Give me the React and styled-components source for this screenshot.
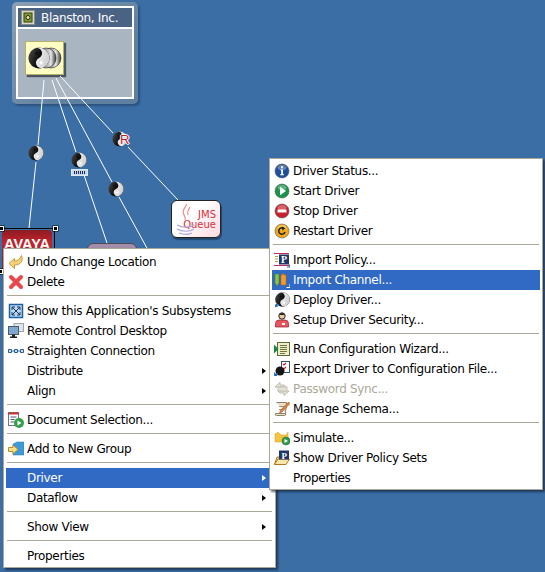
import React from "react";
import styled, { createGlobalStyle } from "styled-components";

const Global = createGlobalStyle`
  html, body { margin: 0; padding: 0; background: #3a6ea5; }
  body { font-family: "DejaVu Sans", "Liberation Sans", sans-serif; }
`;

const Desktop = styled.div`
  position: relative;
  width: 545px;
  height: 572px;
  overflow: hidden;
  background: #3a6ea5;
`;

const Wires = styled.svg`
  position: absolute;
  left: 0;
  top: 0;
`;

const GradientDefs = styled.svg`
  position: absolute;
  width: 0;
  height: 0;
`;

const CompanyFrame = styled.div`
  position: absolute;
  left: 12px;
  top: 2px;
  width: 126px;
  height: 102px;
  box-sizing: border-box;
  padding: 4px;
  border-radius: 5px;
  background: linear-gradient(135deg, #8ba0b4, #5e7f9f 70%);
  box-shadow: 2px 2px 2px #2c5280;
`;

const CompanyInner = styled.div`
  display: flex;
  flex-direction: column;
  height: 93px;
  box-sizing: border-box;
  border: 2px solid #fff;
  background: #a9b5c0;
`;

const CompanyTitle = styled.div`
  display: flex;
  align-items: center;
  gap: 6px;
  height: 19px;
  padding-left: 3px;
  border-bottom: 2px solid #fff;
  background: #4a6283;
  color: #fff;
  font-size: 12px;
  letter-spacing: -0.32px;
  white-space: nowrap;
`;

const TitleBadge = styled.svg`
  flex: none;
`;

const CompanyBody = styled.div`
  padding: 12px 0 0 7px;
`;

const YellowNode = styled.div`
  display: flex;
  align-items: center;
  justify-content: center;
  width: 39px;
  height: 34px;
  box-sizing: border-box;
  border: 1px solid #b5b06a;
  background: #ffffc4;
  box-shadow: 2px 2px 1px #4c5662;
`;

const ConnectorDisc = styled.div`
  position: absolute;
  left: ${(p) => p.$x - 8}px;
  top: ${(p) => p.$y - 8}px;
  width: 16px;
  height: 16px;
`;

const DiscBadge = styled.span`
  position: absolute;
  left: 8px;
  top: 1px;
  color: #c0202c;
  font: 13px/15px "Liberation Sans", sans-serif;
  text-shadow: 1px 0 0 #fff, -1px 0 0 #fff, 0 1px 0 #fff, 0 -1px 0 #fff;
`;

const PolicyBar = styled.div`
  position: absolute;
  left: 71px;
  top: 169px;
  display: flex;
  align-items: center;
  justify-content: center;
  width: 15px;
  height: 5px;
  background: #c4d8f0;
  border: 1px solid #dfe9f5;
  box-sizing: content-box;
`;

const BarDots = styled.div`
  width: 11px;
  height: 3px;
  background: repeating-linear-gradient(90deg, #1c2a50 0 1px, transparent 1px 2px);
`;

const JmsNode = styled.div`
  position: absolute;
  left: 171px;
  top: 200px;
  display: flex;
  flex-direction: column;
  align-items: flex-end;
  justify-content: center;
  width: 50px;
  height: 38px;
  box-sizing: border-box;
  padding: 1px 4px 0 0;
  border: 1px solid #222;
  border-radius: 6px;
  background: linear-gradient(135deg, #fff 40%, #ffd9de);
  box-shadow: 1px 2px 1px #23456e;
  color: #d8303c;
  font: 10px/10px "DejaVu Sans", sans-serif;
`;

const JavaCup = styled.svg`
  position: absolute;
  left: 2px;
  top: 0;
`;

const AvayaFrame = styled.div`
  position: absolute;
  left: 0;
  top: 228px;
  width: 55px;
  height: 46px;
  box-sizing: border-box;
  padding: 1px 2px 0 2px;
  border-top: 1px solid #000;
  border-right: 1px solid #000;
`;

const AvayaLogo = styled.div`
  height: 42px;
  border-radius: 4px;
  background: linear-gradient(180deg, #8c1c22, #c2242c 30%, #901a20);
  color: #fff;
  font: bold 14.5px/28px "Liberation Sans", sans-serif;
  text-align: center;
  white-space: nowrap;
`;

const Handle = styled.div`
  position: absolute;
  left: ${(p) => p.$x}px;
  top: ${(p) => p.$y}px;
  width: 3px;
  height: 3px;
  border: 1px solid #fff;
  background: #000;
  box-shadow: 0 0 0 0.5px #000;
`;

const PurpleNode = styled.div`
  position: absolute;
  left: 87px;
  top: 243px;
  width: 50px;
  height: 30px;
  box-sizing: border-box;
  border: 1px solid #4a4a58;
  border-radius: 6px;
  background: #a48da8;
`;

const Menu = styled.div`
  position: absolute;
  left: ${(p) => p.$left}px;
  top: ${(p) => p.$top}px;
  width: ${(p) => p.$width}px;
  box-sizing: border-box;
  padding: ${(p) => p.$padTop}px 2px 1px 2px;
  border: 1px solid #aca899;
  background: #fff;
  box-shadow: 2px 2px 2px rgba(20, 30, 50, 0.65);
  font-size: 12px;
  letter-spacing: -0.32px;
  color: #000;
`;

const Row = styled.div`
  display: flex;
  align-items: center;
  height: 20px;
  padding-left: 2px;
  white-space: nowrap;
  background: ${(p) => (p.$active ? "#316ac5" : "transparent")};
  color: ${(p) => (p.$active ? "#fff" : p.$disabled ? "#aca899" : "#000")};
`;

const IconSlot = styled.span`
  display: flex;
  flex: none;
  width: 16px;
  height: 16px;
  margin-right: 3px;
`;

const Label = styled.span`
  flex: 1;
`;

const Caret = styled.span`
  flex: none;
  width: 0;
  height: 0;
  margin-right: 7px;
  border-style: solid;
  border-width: 3.5px 0 3.5px 4px;
  border-color: transparent transparent transparent currentColor;
`;

const Sep = styled.div`
  height: 1px;
  margin: 3px 1px 5px;
  background: #aca899;
`;

const Ic = ({ children }) => (
  <svg width="16" height="16" viewBox="0 0 16 16">{children}</svg>
);

const Yin = ({ cx = 8, cy = 8, r = 7.5 }) => (
  <g transform={`translate(${cx} ${cy}) rotate(-25) scale(${r / 7.5})`}>
    <circle r="7.5" fill="url(#yinDark)" />
    <path d="M0-7.5A7.5 7.5 0 0 1 0 7.5A3.75 3.75 0 0 1 0 0A3.75 3.75 0 0 0 0-7.5Z" fill="url(#yinLight)" />
    <circle cy="-3.75" r="1.1" fill="#111" />
    <circle cy="3.75" r="1.1" fill="#fff" />
  </g>
);

const Corner = () => <path d="M1 15.5V12.5H4Z M2 12h3v1.5H3.5V15H2Z" fill="#2a70c0" />;

const Ball = ({ fill, children }) => (
  <Ic>
    <circle cx="8" cy="8" r="7" fill={fill} stroke="#555" strokeWidth="0.6" />
    <ellipse cx="8" cy="4.6" rx="4.5" ry="2.6" fill="#fff" opacity="0.3" />
    {children}
  </Ic>
);

const Undo = () => (
  <Ic>
    <path d="M1 9.5 6.5 4.5V7.2C9.5 7 12 5 13.5 1.5 15.5 6.5 13 11 6.5 11V14.5Z" fill="#f7d27a" stroke="#c69a3c" />
  </Ic>
);
const Del = () => (
  <Ic>
    <path d="M3 3 13 13M13 3 3 13" stroke="#e8474c" strokeWidth="4" strokeLinecap="round" />
  </Ic>
);
const Expand = () => (
  <Ic>
    <rect x="1.5" y="1.5" width="13" height="13" fill="#bcd6ee" stroke="#1d5fa3" strokeWidth="1.5" />
    <path d="M4 4 12 12M12 4 4 12M4 4h3M4 4v3M12 4H9M12 4v3M4 12h3M4 12V9M12 12H9M12 12V9" stroke="#123a60" />
  </Ic>
);
const Monitors = () => (
  <Ic>
    <rect x="6" y="0.5" width="9.5" height="8" fill="#dfe4ea" stroke="#9aa4ae" />
    <rect x="0.5" y="3.5" width="10" height="8" fill="#7fa6cf" stroke="#4d5c6c" />
    <path d="M4 11.5h3v2h2v1.5H2V13.5h2Z" fill="#222" />
  </Ic>
);
const Straighten = () => (
  <Ic>
    <path d="M0 8h16" stroke="#2d6db0" />
    <path d="M0.5 6.5h3v3h-3ZM6.5 6.5h3v3h-3ZM12.5 6.5h3v3h-3Z" fill="#cfe0f2" stroke="#2d5f9c" />
  </Ic>
);
const DocPlay = () => (
  <Ic>
    <rect x="0.5" y="0.5" width="10" height="13" fill="#fff" stroke="#6d7480" />
    <path d="M0.5 1.5h10" stroke="#c33" strokeWidth="2" />
    <path d="M2.5 5h6M2.5 7.5h4M2.5 10h4" stroke="#4a5a7a" />
    <circle cx="11" cy="11" r="5" fill="#35a04a" />
    <path d="M9.5 8.5 13.5 11 9.5 13.5Z" fill="#fff" />
  </Ic>
);
const Group = () => (
  <Ic>
    <path d="M5 3 9 1h7v13H5Z" fill="#3f9ad8" stroke="#2b74b0" strokeWidth="0.5" />
    <path d="M0.5 6.5H5V4l5 4.5L5 13v-2.5H0.5Z" fill="#f9e08a" stroke="#c08a2a" />
  </Ic>
);
const Info = () => (
  <Ball fill="#1c4f9c">
    <path d="M7 3.2h2v2H7ZM6.5 6.5H9V11.2h1v1H6.2v-1h1V7.5h-.7Z" fill="#fff" />
  </Ball>
);
const Start = () => (
  <Ball fill="#19934a">
    <path d="M6 3.8 12 8 6 12.2Z" fill="#fff" />
  </Ball>
);
const Stop = () => (
  <Ball fill="#c8202c">
    <rect x="3.5" y="6.5" width="9" height="3" fill="#fff" />
  </Ball>
);
const Restart = () => (
  <Ball fill="#f0a818">
    <path d="M11 9A3.2 3.2 0 1 1 9.5 5.2" fill="none" stroke="#222" strokeWidth="1.5" />
    <path d="M8.2 3.5 11.5 5.5 8.2 7.5Z" fill="#222" />
  </Ball>
);
const Policy = () => (
  <Ic>
    <path d="M0 1.5h15M0 13.5h15" stroke="#c8285a" />
    <rect x="5" y="2.5" width="10" height="10" fill="#1e3766" />
    <text x="10" y="11" textAnchor="middle" fontSize="10" fontWeight="bold" fill="#fff" fontFamily="Liberation Serif">P</text>
    <path d="M1 4.5h3M1 7h3M1 9.5h3" stroke="#b0a040" />
    <path d="M13 15.5h3v-3h-1v2h-2Z" fill="#2a70c0" />
  </Ic>
);
const Channel = () => (
  <Ic>
    <path d="M1 2h4v9l-2 3-2-3Z" fill="#8cc63f" stroke="#4d7a1f" strokeWidth="0.5" />
    <path d="M8 3l1-2 1 2h2v10H7V3Z" fill="#f79a28" stroke="#b8660c" strokeWidth="0.5" />
    <path d="M12.5 15.5H16V12" fill="none" stroke="#fff" />
  </Ic>
);
const Deploy = () => (
  <Ic>
    <Yin cx={8.5} cy={7.5} r={7.3} />
    <Corner />
  </Ic>
);
const Security = () => (
  <Ic>
    <circle cx="8" cy="4" r="3.2" fill="#f2c9a6" stroke="#222" />
    <path d="M5 3 8 .7 11 3Z" fill="#222" />
    <path d="M1.5 15V11.500Q1.5 8 5 8H11Q14.5 8 14.5 11.500V15Z" fill="#e8555f" stroke="#8c2028" strokeWidth="0.7" />
    <rect x="8" y="11" width="3" height="2" fill="#fff" />
  </Ic>
);
const Wizard = () => (
  <Ic>
    <rect x="3.5" y="1.5" width="12" height="13" fill="#efeec8" stroke="#5e6a3a" />
    <path d="M6 4.5h7M6 6.5h7M6 8.5h7M6 10.5h7M6 12.5h5" stroke="#6d7640" />
    <path d="M0 3.5 4.5 8 0 12.5Z" fill="#168a40" />
  </Ic>
);
const Export = () => (
  <Ic>
    <rect x="7.5" y="0.5" width="8" height="11" fill="#fff" stroke="#35507a" />
    <path d="M9 3l1 1 2-2M9 7l1 1 2-2" fill="none" stroke="#d8202c" strokeWidth="1.2" />
    <circle cx="6" cy="10" r="4.5" fill="#161616" />
    <path d="M0 15V11L2 13l2-1-1 3Z" fill="#2a70c0" />
  </Ic>
);
const Password = () => (
  <Ic>
    <path d="M1 6 6 1.5V4h4l2 2Z M15 10 10 14.5V12H6l-2-2Z" fill="#e8e6da" stroke="#bcb9aa" />
    <rect x="4" y="6" width="9" height="4" fill="#e4e2d6" stroke="#c4c1b3" />
  </Ic>
);
const Schema = () => (
  <Ic>
    <path d="M2.5 1.5h10l-1 11H1.5q-1 2 1 2h8q2 0 1-2" fill="#e6e0c8" stroke="#8c8468" />
    <path d="M5 8.5h5M5 5.5h6" stroke="#9c947a" />
    <path d="M14.5 1 6.5 9.5 5.5 12 8 11 16 2.5Z" fill="#e8823a" stroke="#8c4a18" strokeWidth="0.5" />
  </Ic>
);
const Simulate = () => (
  <Ic>
    <path d="M1 4 4 2l3 3h5l2-3v10H1Z" fill="#f5c33f" stroke="#d39a22" strokeWidth="0.5" />
    <circle cx="12" cy="11" r="4" fill="#2f9c4a" stroke="#1a6a30" strokeWidth="0.5" />
    <path d="M10.5 9 14 11 10.5 13Z" fill="#fff" />
  </Ic>
);
const PolicyFolder = () => (
  <Ic>
    <path d="M.5 14.5 3 7h3V14.5Z" fill="#f8d890" stroke="#b07a20" />
    <path d="M.5 14.5 4 9H15.5L12 14.5Z" fill="#fbe4a8" stroke="#b07a20" />
    <rect x="5" y="0.5" width="10" height="9" fill="#1e3766" />
    <text x="10" y="8.5" textAnchor="middle" fontSize="9" fontWeight="bold" fill="#fff" fontFamily="Liberation Serif">P</text>
  </Ic>
);

const SEP = { sep: true };

const leftItems = [
  { label: "Undo Change Location", Icon: Undo },
  { label: "Delete", Icon: Del },
  SEP,
  { label: "Show this Application's Subsystems", Icon: Expand },
  { label: "Remote Control Desktop", Icon: Monitors },
  { label: "Straighten Connection", Icon: Straighten },
  { label: "Distribute", sub: true },
  { label: "Align", sub: true },
  SEP,
  { label: "Document Selection...", Icon: DocPlay },
  SEP,
  { label: "Add to New Group", Icon: Group },
  SEP,
  { label: "Driver", sub: true, active: true },
  { label: "Dataflow", sub: true },
  SEP,
  { label: "Show View", sub: true },
  SEP,
  { label: "Properties" },
];

const rightItems = [
  { label: "Driver Status...", Icon: Info },
  { label: "Start Driver", Icon: Start },
  { label: "Stop Driver", Icon: Stop },
  { label: "Restart Driver", Icon: Restart },
  SEP,
  { label: "Import Policy...", Icon: Policy },
  { label: "Import Channel...", Icon: Channel, active: true },
  { label: "Deploy Driver...", Icon: Deploy },
  { label: "Setup Driver Security...", Icon: Security },
  SEP,
  { label: "Run Configuration Wizard...", Icon: Wizard },
  { label: "Export Driver to Configuration File...", Icon: Export },
  { label: "Password Sync...", Icon: Password, disabled: true },
  { label: "Manage Schema...", Icon: Schema },
  SEP,
  { label: "Simulate...", Icon: Simulate },
  { label: "Show Driver Policy Sets", Icon: PolicyFolder },
  { label: "Properties" },
];

const MenuList = ({ items, ...rest }) => (
  <Menu {...rest}>
    {items.map((it, i) =>
      it.sep ? (
        <Sep key={i} />
      ) : (
        <Row key={i} $active={it.active} $disabled={it.disabled}>
          <IconSlot>{it.Icon && <it.Icon />}</IconSlot>
          <Label>{it.label}</Label>
          {it.sub && <Caret />}
        </Row>
      )
    )}
  </Menu>
);

const Disc = ({ x, y, children }) => (
  <ConnectorDisc $x={x} $y={y}>
    <Ic>
      <Yin />
    </Ic>
    {children}
  </ConnectorDisc>
);

const wires = [
  "M44 80 38 145", "M36 162 29 228",
  "M52 80 76 152", "M84 175 107 243",
  "M56 78 112 182", "M119 197 148 250",
  "M60 76 113 133", "M128 147 178 200",
];

export default function App() {
  return (
    <Desktop>
      <Global />
      <GradientDefs>
        <defs>
          <linearGradient id="yinDark" x1="0" y1="0" x2="1" y2="1">
            <stop offset="0" stopColor="#555" />
            <stop offset="0.5" stopColor="#0c0c0c" />
            <stop offset="1" stopColor="#000" />
          </linearGradient>
          <linearGradient id="yinLight" x1="0" y1="0" x2="1" y2="1">
            <stop offset="0" stopColor="#fff" />
            <stop offset="1" stopColor="#c4c4c4" />
          </linearGradient>
          <linearGradient id="discBack" x1="0" y1="0" x2="1" y2="0">
            <stop offset="0" stopColor="#222" />
            <stop offset="0.75" stopColor="#e4e4e4" />
            <stop offset="1" stopColor="#333" />
          </linearGradient>
        </defs>
      </GradientDefs>

      <CompanyFrame>
        <CompanyInner>
          <CompanyTitle>
            <TitleBadge width="14" height="15" viewBox="0 0 14 15">
              <rect x="0.5" y="0.5" width="13" height="14" fill="#d8d8c8" stroke="#8c8c80" />
              <rect x="3" y="3" width="8" height="9" fill="#7fa030" stroke="#304010" />
              <circle cx="7" cy="7.5" r="2" fill="#f0e8a0" stroke="#222" />
            </TitleBadge>
            Blanston, Inc.
          </CompanyTitle>
          <CompanyBody>
            <YellowNode>
              <svg width="34" height="22" viewBox="0 0 34 22">
                <circle cx="23" cy="11" r="10" fill="url(#discBack)" stroke="#222" strokeWidth="0.6" />
                <circle cx="18" cy="11" r="10" fill="url(#discBack)" stroke="#222" strokeWidth="0.6" />
                <Yin cx={11} cy={11} r={10.5} />
              </svg>
            </YellowNode>
          </CompanyBody>
        </CompanyInner>
      </CompanyFrame>

      <Wires width="545" height="572" viewBox="0 0 545 572">
        {wires.map((d) => (
          <path key={d} d={d} stroke="#fff" strokeWidth="1" fill="none" />
        ))}
      </Wires>

      <Disc x={36} y={153} />
      <Disc x={79} y={160} />
      <PolicyBar>
        <BarDots />
      </PolicyBar>
      <Disc x={116} y={189} />
      <Disc x={120} y={139}>
        <DiscBadge>R</DiscBadge>
      </Disc>

      <JmsNode>
        <JavaCup width="24" height="36" viewBox="0 0 24 36">
          <path d="M13 3C10 8 8 10 10 14 11 16 12 17 11 19M16 6C14 9 13 11 14 14" fill="none" stroke="#e88" strokeWidth="1.2" />
          <path d="M3 24C8 27 16 27 20 24M3 28C8 31 16 31 20 28M5 32C10 34 14 34 18 32" fill="none" stroke="#a8a8d8" strokeWidth="1.2" />
        </JavaCup>
        <span>JMS</span>
        <span>Queue</span>
      </JmsNode>

      <PurpleNode />

      <AvayaFrame>
        <AvayaLogo>AVAYA</AvayaLogo>
      </AvayaFrame>
      <Handle $x={-1} $y={226} />
      <Handle $x={53} $y={226} />
      <Handle $x={-2} $y={269} />

      <MenuList items={leftItems} $left={3} $top={248} $width={273} $padTop={3} />
      <MenuList items={rightItems} $left={269} $top={158} $width={274} $padTop={2} />
    </Desktop>
  );
}
